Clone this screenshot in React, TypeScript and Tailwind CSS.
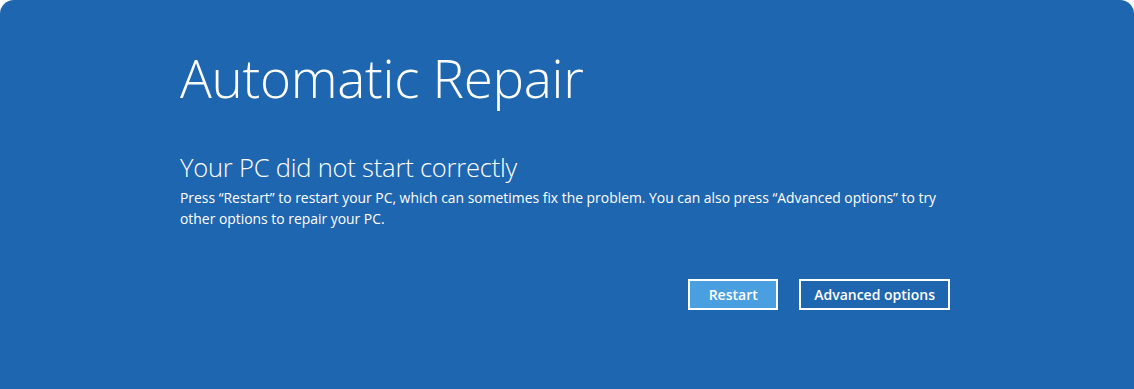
export default function App() {
    return (
        <div className="w-[1134px] h-[389px] bg-white">
            <div
                className="w-full h-full bg-[#1f66b0] rounded-t-[14px] text-white pl-[180px] pt-[42px]"
                style={{ fontFamily: '"Open Sans", "Noto Sans", sans-serif' }}
            >
                <h1 className="text-[53px] font-light leading-[72px] tracking-[-0.3px]">
                    Automatic Repair
                </h1>
                <h2 className="mt-[38px] text-[25.5px] font-light leading-[30px] tracking-[-0.2px]">
                    Your PC did not start correctly
                </h2>
                <p className="mt-[5px] w-[770px] text-[13.9px] leading-[21px]">
                    Press “Restart” to restart your PC, which can sometimes fix
                    the problem. You can also press “Advanced options” to try
                    other options to repair your PC.
                </p>
                <div className="flex justify-end gap-[21px] w-[770px] mt-[50px]">
                    <button className="h-[31px] w-[90px] border-2 border-white bg-[#4a9fe0] text-[14px] font-semibold">
                        Restart
                    </button>
                    <button className="h-[31px] px-[13px] border-2 border-white text-[14px] font-semibold">
                        Advanced options
                    </button>
                </div>
            </div>
        </div>
    );
}
